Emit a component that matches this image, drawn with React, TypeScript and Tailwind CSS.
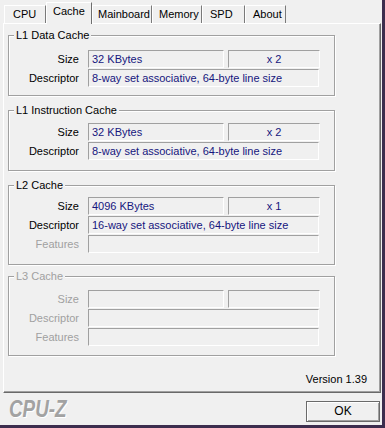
import React from "react";

const font = { fontFamily: '"Liberation Sans", Arial, sans-serif' };

function Field({ w, text, center }: { w: string; text?: string; center?: boolean }) {
  return (
    <div
      className={`${w} h-[18px] border border-t-[#a0a0a0] border-l-[#a0a0a0] border-b-white border-r-white flex items-center text-[#16167e] leading-[13px] whitespace-nowrap overflow-hidden ${
        center ? "justify-center" : "pl-[3px]"
      }`}
    >
      {text}
    </div>
  );
}

function Row({ label, children, disabled }: { label: string; children: React.ReactNode; disabled?: boolean }) {
  return (
    <div className="flex items-center h-[18px]">
      <div className={`w-[70px] text-right leading-[13px] ${disabled ? "text-[#a0a0a0]" : "text-black"}`}>{label}</div>
      <div className="ml-[9px] flex gap-[4px]">{children}</div>
    </div>
  );
}

function Group({
  title,
  disabled,
  className,
  children,
}: {
  title: string;
  disabled?: boolean;
  className: string;
  children: React.ReactNode;
}) {
  return (
    <div
      className={`relative w-[327px] border border-[#a0a0a0] shadow-[inset_1px_1px_0_#ffffff,1px_1px_0_#ffffff] flex flex-col gap-[1px] ${className}`}
    >
      <div
        className={`absolute left-[5px] top-[-7px] px-[2px] bg-[#f0f0f0] leading-[13px] ${
          disabled ? "text-[#a0a0a0]" : "text-black"
        }`}
      >
        {title}
      </div>
      {children}
    </div>
  );
}

function Tab({ label, w, pl, selected }: { label: string; w: string; pl: string; selected?: boolean }) {
  if (selected) {
    return (
      <div
        className={`relative z-10 ${w} ${pl} h-[22px] -mb-[1px] bg-[#f0f0f0] border-t border-l border-white border-r border-r-[#6e6e6e] flex items-center pb-[4px] leading-[13px] text-black`}
      >
        {label}
      </div>
    );
  }
  return (
    <div
      className={`${w} ${pl} h-[18px] border-t border-l border-white border-r border-r-[#7a7a7a] flex items-center leading-[13px] text-black`}
    >
      {label}
    </div>
  );
}

export default function App() {
  return (
    <div
      className="w-[385px] h-[428px] bg-[#f0f0f0] border-r-[3px] border-b-[3px] border-[#3c2d4e] flex flex-col text-[11px] select-none"
      style={font}
    >
      {/* Tabs */}
      <div className="h-[23px] flex items-end pl-[4px]">
        <Tab label="CPU" w="w-[42px]" pl="pl-[8px]" />
        <Tab label="Cache" w="w-[46px]" pl="pl-[6px]" selected />
        <Tab label="Mainboard" w="w-[60px]" pl="pl-[5px]" />
        <Tab label="Memory" w="w-[50px]" pl="pl-[6px]" />
        <Tab label="SPD" w="w-[43px]" pl="pl-[7px]" />
        <Tab label="About" w="w-[41px]" pl="pl-[7px]" />
      </div>

      {/* Panel */}
      <div className="ml-[3px] w-[378px] h-[370px] border border-t-white border-l-white border-r-[#696969] border-b-[#696969] shadow-[inset_-1px_-1px_0_#a0a0a0] flex flex-col pl-[4px]">
        <Group title="L1 Data Cache" className="mt-[11px] h-[61px] pt-[14px]">
          <Row label="Size">
            <Field w="w-[136px]" text="32 KBytes" />
            <Field w="w-[92px]" text="x 2" center />
          </Row>
          <Row label="Descriptor">
            <Field w="w-[231px]" text="8-way set associative, 64-byte line size" />
          </Row>
        </Group>

        <Group title="L1 Instruction Cache" className="mt-[14px] h-[61px] pt-[12px]">
          <Row label="Size">
            <Field w="w-[136px]" text="32 KBytes" />
            <Field w="w-[92px]" text="x 2" center />
          </Row>
          <Row label="Descriptor">
            <Field w="w-[231px]" text="8-way set associative, 64-byte line size" />
          </Row>
        </Group>

        <Group title="L2 Cache" className="mt-[14px] h-[80px] pt-[11px]">
          <Row label="Size">
            <Field w="w-[136px]" text="4096 KBytes" />
            <Field w="w-[92px]" text="x 1" center />
          </Row>
          <Row label="Descriptor">
            <Field w="w-[231px]" text="16-way set associative, 64-byte line size" />
          </Row>
          <Row label="Features" disabled>
            <Field w="w-[231px]" />
          </Row>
        </Group>

        <Group title="L3 Cache" disabled className="mt-[11px] h-[80px] pt-[13px]">
          <Row label="Size" disabled>
            <Field w="w-[136px]" />
            <Field w="w-[92px]" />
          </Row>
          <Row label="Descriptor" disabled>
            <Field w="w-[231px]" />
          </Row>
          <Row label="Features" disabled>
            <Field w="w-[231px]" />
          </Row>
        </Group>

        <div className="mt-auto mb-[6px] pr-[13px] flex justify-end leading-[13px] text-black">Version 1.39</div>
      </div>

      {/* Bottom */}
      <div className="h-[32px] flex items-start justify-between pl-[9px] pr-[2px]">
        <div className="mt-[4px] inline-block origin-left scale-x-[0.82] text-[23px] leading-[24px] font-bold italic text-[#a2a2a2] [text-shadow:1px_1px_0_#ffffff]">
          CPU-Z
        </div>
        <div className="mt-[8px] w-[74px] h-[21px] border border-[#6a6a6a] shadow-[inset_1px_1px_0_#ffffff,inset_-1px_-1px_0_#a0a0a0] flex items-center justify-center text-[12px] leading-[13px] text-black">
          OK
        </div>
      </div>
    </div>
  );
}
